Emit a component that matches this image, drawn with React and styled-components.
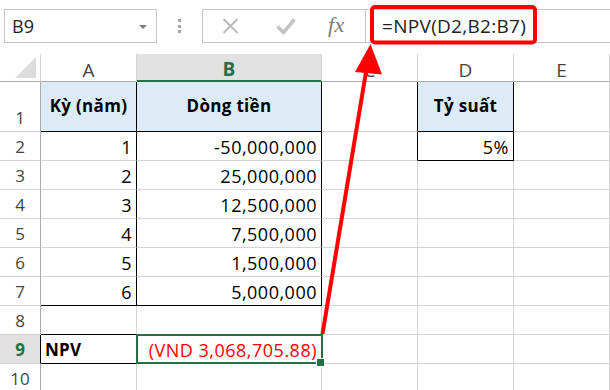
import React from 'react';
import styled, { createGlobalStyle, css } from 'styled-components';

const GlobalStyle = createGlobalStyle`
  html, body { margin: 0; padding: 0; background: #fff; }
  body {
    width: 610px; height: 390px; overflow: hidden;
    font-family: "Open Sans", "Liberation Sans", sans-serif;
  }
  * { box-sizing: border-box; }
`;

const GREEN = '#217346';
const GRID = '#d4d4d4';
const HEAD_LINE = '#ababab';

const Page = styled.div`
  position: relative;
  width: 610px;
  height: 390px;
  overflow: hidden;
  background: #fff;
`;

const TopBar = styled.div`
  display: flex;
  align-items: flex-start;
  height: 54px;
  padding: 9px 0 0 4px;
`;

const NameBox = styled.div`
  width: 153px;
  height: 34px;
  border: 1px solid #c6c6c6;
  display: flex;
  align-items: center;
  justify-content: space-between;
  padding: 0 9px 0 7px;
  font-size: 18px;
  color: #222;
`;

const DropArrow = styled.span`
  width: 0;
  height: 0;
  border-left: 4px solid transparent;
  border-right: 4px solid transparent;
  border-top: 4px solid #7a7a7a;
  margin-top: 1px;
`;

const Dots = styled.div`
  display: flex;
  flex-direction: column;
  gap: 2.5px;
  margin: 10px 21px 0 21px;
`;

const Dot = styled.span`
  width: 3px;
  height: 3px;
  background: #a6a6a6;
`;

const FxButtons = styled.div`
  width: 164px;
  height: 34px;
  border: 1px solid #c6c6c6;
  display: flex;
  align-items: center;
  padding-left: 18px;
`;

const IconSlot = styled.div`
  width: ${(p) => p.$w}px;
  display: flex;
  align-items: center;
  justify-content: center;
`;

const FxText = styled.span`
  font-family: "Liberation Serif", "DejaVu Serif", serif;
  font-style: italic;
  font-size: 22px;
  color: #7a7a7a;
  letter-spacing: 0.5px;
  margin-top: -2px;
`;

const FormulaInput = styled.div`
  flex: 1;
  height: 34px;
  border-top: 1px solid #c6c6c6;
  border-bottom: 1px solid #c6c6c6;
  display: flex;
  align-items: center;
  padding-left: 16px;
  font-size: 19px;
  color: #222;
  letter-spacing: 0.3px;
`;

const Sheet = styled.div`
  display: grid;
  grid-template-columns: 41px 96px 185px 96px 96px 96px;
  grid-template-rows: 28px 50px repeat(9, 29px);
`;

const Corner = styled.div`
  border-right: 1px solid ${GRID};
  border-bottom: 1px solid ${HEAD_LINE};
  display: flex;
  align-items: flex-end;
  justify-content: flex-end;
  padding: 0 4px 3px 0;
`;

const ColHeader = styled.div`
  border-right: 1px solid ${GRID};
  border-bottom: ${(p) => (p.$sel ? `2px solid ${GREEN}` : `1px solid ${HEAD_LINE}`)};
  background: ${(p) => (p.$sel ? '#e1e1e1' : '#fff')};
  color: ${(p) => (p.$sel ? GREEN : '#444')};
  font-weight: ${(p) => (p.$sel ? 700 : 400)};
  font-size: 19px;
  display: flex;
  align-items: center;
  justify-content: center;
  padding-top: ${(p) => (p.$sel ? 3 : 4)}px;
`;

const RowHeader = styled.div`
  border-bottom: 1px solid ${GRID};
  border-right: 1px solid ${(p) => (p.$sel ? '#000' : HEAD_LINE)};
  background: ${(p) => (p.$sel ? '#e1e1e1' : '#fff')};
  color: ${(p) => (p.$sel ? GREEN : '#444')};
  font-weight: ${(p) => (p.$sel ? 700 : 400)};
  font-size: 17px;
  line-height: 22px;
  display: flex;
  align-items: flex-end;
  justify-content: center;
  padding-bottom: 2px;
`;

const Cell = styled.div`
  position: relative;
  border-right: 1px solid ${(p) => (p.$br ? '#000' : GRID)};
  border-bottom: 1px solid ${(p) => (p.$bb ? '#000' : GRID)};
  background: ${(p) => p.$bg || 'transparent'};
  color: ${(p) => p.$color || '#000'};
  font-weight: ${(p) => (p.$bold ? 700 : 400)};
  font-size: ${(p) => (p.$bold ? 17 : 18)}px;
  letter-spacing: ${(p) => (p.$bold ? 0.3 : 0.5)}px;
  line-height: 22px;
  white-space: nowrap;
  display: flex;
  align-items: ${(p) => (p.$mid ? 'center' : 'flex-end')};
  justify-content: ${(p) =>
    p.$align === 'right' ? 'flex-end' : p.$align === 'center' ? 'center' : 'flex-start'};
  padding: 0 4px 2px 4px;
  ${(p) =>
    p.$sel &&
    css`
      z-index: 2;
      &::after {
        content: '';
        position: absolute;
        top: -1px;
        left: -1px;
        right: -2px;
        bottom: -1px;
        border: 2px solid ${GREEN};
        pointer-events: none;
      }
      &::before {
        content: '';
        position: absolute;
        right: -4px;
        bottom: -4px;
        width: 7px;
        height: 7px;
        background: ${GREEN};
        border: 1px solid #fff;
        z-index: 3;
      }
    `}
`;

const Overlay = styled.svg`
  position: absolute;
  top: 0;
  left: 0;
  width: 610px;
  height: 390px;
  pointer-events: none;
  z-index: 10;
`;

const BLUE = '#ddebf7';
const COLS = ['A', 'B', 'C', 'D', 'E'];

const rows = [
  {
    n: 1,
    cells: [
      { t: 'Kỳ (năm)', bold: true, align: 'center', mid: true, bg: BLUE, br: true, bb: true },
      { t: 'Dòng tiền', bold: true, align: 'center', mid: true, bg: BLUE, br: true, bb: true },
      { br: true },
      { t: 'Tỷ suất', bold: true, align: 'center', mid: true, bg: BLUE, br: true, bb: true },
      {},
    ],
  },
  {
    n: 2,
    cells: [
      { t: '1', align: 'right', br: true },
      { t: '-50,000,000', align: 'right', br: true },
      { br: true },
      { t: '5%', align: 'right', br: true, bb: true },
      {},
    ],
  },
  ...[
    ['2', '25,000,000'],
    ['3', '12,500,000'],
    ['4', '7,500,000'],
    ['5', '1,500,000'],
    ['6', '5,000,000'],
  ].map(([k, v], i) => ({
    n: i + 3,
    cells: [
      { t: k, align: 'right', br: true, bb: i === 4 },
      { t: v, align: 'right', br: true, bb: i === 4 },
      {},
      {},
      {},
    ],
  })),
  { n: 8, cells: [{ bb: true }, {}, {}, {}, {}] },
  {
    n: 9,
    sel: true,
    cells: [
      { t: 'NPV', bold: true, bb: true },
      { t: '(VND 3,068,705.88)', align: 'right', color: '#ff0000', sel: true },
      {},
      {},
      {},
    ],
  },
  { n: 10, cells: [{}, {}, {}, {}, {}] },
];

export default function App() {
  return (
    <Page>
      <GlobalStyle />
      <TopBar>
        <NameBox>
          <span>B9</span>
          <DropArrow />
        </NameBox>
        <Dots>
          <Dot />
          <Dot />
          <Dot />
        </Dots>
        <FxButtons>
          <IconSlot $w={18}>
            <svg width="17" height="16" viewBox="0 0 17 16">
              <path d="M1.5 1 L15.5 15 M15.5 1 L1.5 15" stroke="#b9b9b9" strokeWidth="2" fill="none" />
            </svg>
          </IconSlot>
          <IconSlot $w={37} />
          <IconSlot $w={20}>
            <svg width="20" height="17" viewBox="0 0 20 17">
              <path d="M1.5 8.5 L7.5 14.5 L18.5 1.5" stroke="#c4c4c4" strokeWidth="3.5" fill="none" />
            </svg>
          </IconSlot>
          <IconSlot $w={32} />
          <FxText>fx</FxText>
        </FxButtons>
        <FormulaInput>=NPV(D2,B2:B7)</FormulaInput>
      </TopBar>

      <Sheet>
        <Corner>
          <svg width="21" height="21" viewBox="0 0 21 21">
            <polygon points="21,0 21,21 0,21" fill="#dcdcdc" />
          </svg>
        </Corner>
        {COLS.map((c) => (
          <ColHeader key={c} $sel={c === 'B'}>
            {c}
          </ColHeader>
        ))}
        {rows.map((r) => (
          <React.Fragment key={r.n}>
            <RowHeader $sel={r.sel}>{r.n}</RowHeader>
            {r.cells.map((c, i) => (
              <Cell
                key={i}
                $bg={c.bg}
                $bold={c.bold}
                $align={c.align}
                $mid={c.mid}
                $br={c.br}
                $bb={c.bb}
                $color={c.color}
                $sel={c.sel}
              >
                {c.t}
              </Cell>
            ))}
          </React.Fragment>
        ))}
      </Sheet>

      <Overlay viewBox="0 0 610 390">
        <rect x="372" y="7" width="163" height="35.5" rx="3" ry="3" fill="none" stroke="#ff0000" strokeWidth="4" />
        <line x1="322.5" y1="334" x2="367" y2="66" stroke="#ff0000" strokeWidth="4" />
        <polygon points="370.5,44 355,72 382,74.5" fill="#ff0000" />
      </Overlay>
    </Page>
  );
}
